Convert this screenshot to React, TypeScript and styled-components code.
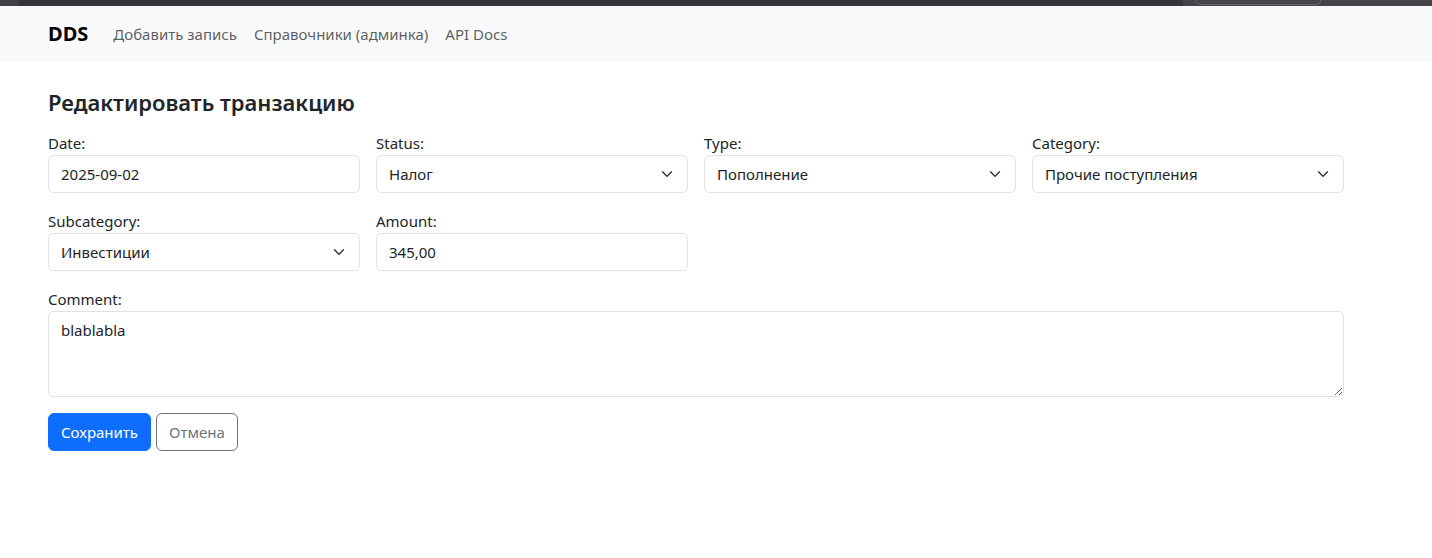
import React from "react";
import styled, { createGlobalStyle } from "styled-components";

const Global = createGlobalStyle`
  * { box-sizing: border-box; }
  html, body { margin: 0; padding: 0; background: #fff; }
  body {
    font-family: "Noto Sans", "Open Sans", "Liberation Sans", sans-serif;
    font-size: 15px;
    line-height: 24px;
    color: #212529;
  }
`;

const ChromeStrip = styled.div`
  height: 6px;
  display: flex;
  background: #3e3d44;
`;

const ChromeSegment = styled.div<{ $w?: number; $bg: string; $grow?: boolean }>`
  flex: ${(p) => (p.$grow ? "1 1 auto" : `0 0 ${p.$w}px`)};
  background: ${(p) => p.$bg};
  display: flex;
  align-items: flex-start;
`;

const ChromePill = styled.div`
  margin-left: 12px;
  width: 126px;
  height: 5px;
  border: 1px solid #64636a;
  border-top: none;
  border-radius: 0 0 6px 6px;
`;

const Navbar = styled.nav`
  background: #f8f9fa;
  padding: 8px 48px;
  display: flex;
  align-items: center;
`;

const Brand = styled.a`
  font-size: 20px;
  font-weight: 700;
  line-height: 30px;
  padding: 5px 0;
  margin-right: 17px;
  color: #000;
  text-decoration: none;
`;

const NavList = styled.div`
  display: flex;
`;

const NavLink = styled.a`
  padding: 8px 8.5px;
  color: rgba(0, 0, 0, 0.65);
  text-decoration: none;
  line-height: 24px;
  &:first-child { padding-left: 8px; }
`;

const Main = styled.main`
  padding: 26px 48px 0;
  width: 1392px;
`;

const Title = styled.h4`
  margin: 0 0 14px;
  font-size: 22px;
  font-weight: 600;
  line-height: 28.8px;
`;

const Grid = styled.div`
  display: grid;
  grid-template-columns: repeat(4, 312px);
  column-gap: 16px;
  row-gap: 16px;
`;

const Field = styled.div<{ $span?: number }>`
  grid-column: span ${(p) => p.$span || 1};
  display: flex;
  flex-direction: column;
`;

const Label = styled.label`
  line-height: 24px;
`;

const controlBase = `
  font-family: inherit;
  font-size: 15px;
  line-height: 24px;
  color: #212529;
  background-color: #fff;
  border: 1px solid #dee2e6;
  border-radius: 6px;
  padding: 6px 12px;
  width: 100%;
  outline: none;
`;

const Input = styled.input`
  ${controlBase}
  height: 38px;
`;

const chevron =
  "url(\"data:image/svg+xml,%3csvg xmlns='http://www.w3.org/2000/svg' viewBox='0 0 16 16'%3e%3cpath fill='none' stroke='%23343a40' stroke-linecap='round' stroke-linejoin='round' stroke-width='2' d='m2 5 6 6 6-6'/%3e%3c/svg%3e\")";

const Select = styled.select`
  ${controlBase}
  height: 38px;
  appearance: none;
  padding-right: 36px;
  background-image: ${chevron};
  background-repeat: no-repeat;
  background-position: right 12px center;
  background-size: 16px 12px;
`;

const TextArea = styled.textarea`
  ${controlBase}
  height: 86px;
  resize: vertical;
  display: block;
`;

const Actions = styled.div`
  display: flex;
  gap: 5px;
  margin-top: 16px;
`;

const Button = styled.button<{ $variant: "primary" | "outline" }>`
  font-family: inherit;
  font-size: 15px;
  line-height: 24px;
  padding: 6px 12px;
  border-radius: 6px;
  cursor: pointer;
  border: 1px solid ${(p) => (p.$variant === "primary" ? "#0d6efd" : "#6c757d")};
  background: ${(p) => (p.$variant === "primary" ? "#0d6efd" : "transparent")};
  color: ${(p) => (p.$variant === "primary" ? "#fff" : "#6c757d")};
`;

export default function App() {
  return (
    <>
      <Global />
      <ChromeStrip>
        <ChromeSegment $w={18} $bg="#403f46" />
        <ChromeSegment $grow $bg="#36353c" />
        <ChromeSegment $w={249} $bg="#45444b">
          <ChromePill />
        </ChromeSegment>
      </ChromeStrip>
      <Navbar>
        <Brand href="#">DDS</Brand>
        <NavList>
          <NavLink href="#">Добавить запись</NavLink>
          <NavLink href="#">Справочники (админка)</NavLink>
          <NavLink href="#">API Docs</NavLink>
        </NavList>
      </Navbar>
      <Main>
        <Title>Редактировать транзакцию</Title>
        <form onSubmit={(e) => e.preventDefault()}>
          <Grid>
            <Field>
              <Label>Date:</Label>
              <Input defaultValue="2025-09-02" />
            </Field>
            <Field>
              <Label>Status:</Label>
              <Select defaultValue="nalog">
                <option value="nalog">Налог</option>
              </Select>
            </Field>
            <Field>
              <Label>Type:</Label>
              <Select defaultValue="pop">
                <option value="pop">Пополнение</option>
              </Select>
            </Field>
            <Field>
              <Label>Category:</Label>
              <Select defaultValue="proch">
                <option value="proch">Прочие поступления</option>
              </Select>
            </Field>
            <Field>
              <Label>Subcategory:</Label>
              <Select defaultValue="inv">
                <option value="inv">Инвестиции</option>
              </Select>
            </Field>
            <Field>
              <Label>Amount:</Label>
              <Input defaultValue="345,00" />
            </Field>
            <Field $span={4}>
              <Label>Comment:</Label>
              <TextArea defaultValue="blablabla" />
            </Field>
          </Grid>
          <Actions>
            <Button $variant="primary" type="submit">Сохранить</Button>
            <Button $variant="outline" type="button">Отмена</Button>
          </Actions>
        </form>
      </Main>
    </>
  );
}
